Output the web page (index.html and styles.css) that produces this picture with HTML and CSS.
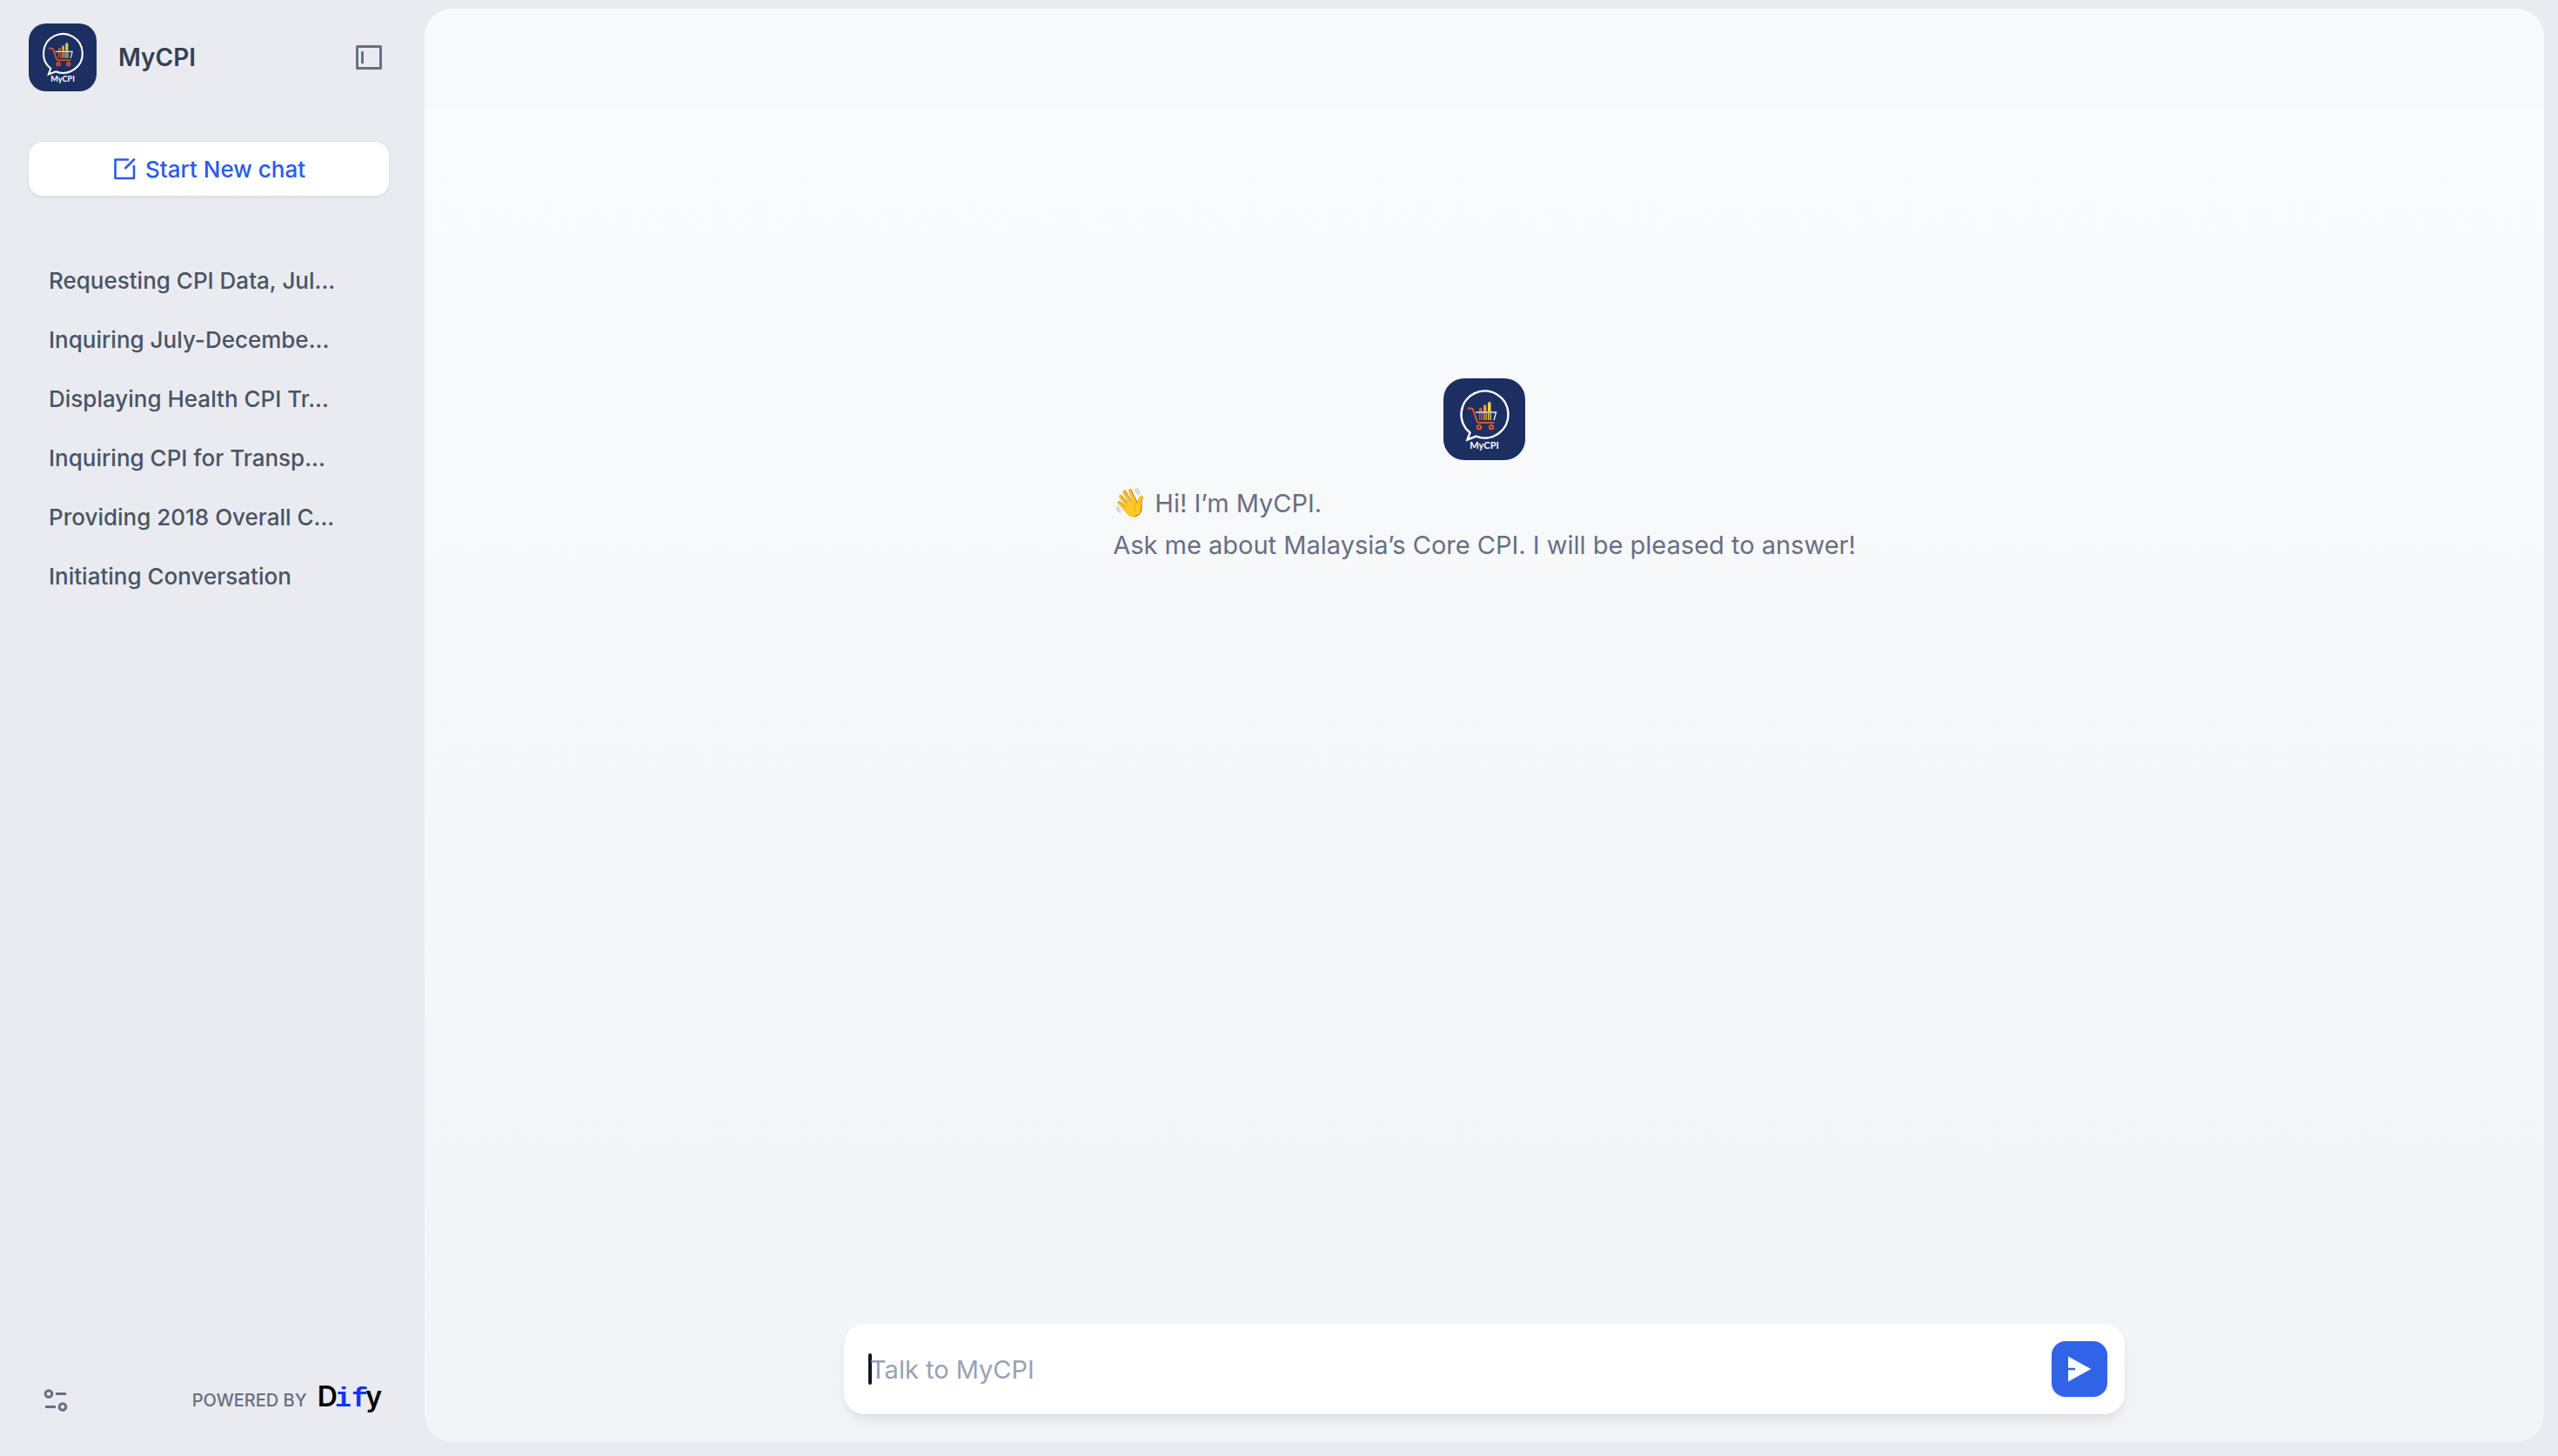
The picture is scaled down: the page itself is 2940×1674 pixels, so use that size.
FILE: index.html
```html
<!DOCTYPE html>
<html lang="en">
<head>
<meta charset="utf-8">
<meta name="viewport" content="width=device-width, initial-scale=1">
<title>MyCPI</title>
<link rel="stylesheet" href="styles.css">
</head>
<body>
<div class="app">
  <aside class="sidebar">
    <header class="brand">
      <svg class="brand-logo" viewBox="0 0 94 94" role="img" aria-label="MyCPI logo">
        <rect width="94" height="94" fill="#1c2f62"/>
        <path d="M30.500 62.500 A27 27 0 1 1 37.500 66.600 L27.500 70.500 Z" fill="none" stroke="#fff" stroke-width="2.500"/>
        <path d="M28.500 34.500H32q1.500 0 2 1.500L38.500 49q.6 1.900 2.500 1.900H57.500" fill="none" stroke="#e2572b" stroke-width="2" stroke-linecap="round"/>
        <g fill="none" stroke="#e2572b" stroke-width="2"><circle cx="41" cy="56.200" r="2.200"/><circle cx="55" cy="56.200" r="2.200"/></g>
        <path d="M41 38V35.300a1.700 1.700 0 0 1 3.400 0V38z" fill="#e2572b"/>
        <path d="M46 38V32a1.700 1.700 0 0 1 3.400 0v6z" fill="#eda13a"/>
        <path d="M51 38V28.700a1.800 1.800 0 0 1 3.600 0V38z" fill="#f0d13c"/>
        <path d="M41.700 40v8M44.200 40v8" stroke="#e2572b" stroke-width="1.400"/>
        <path d="M46.900 40v8M49.200 40v8" stroke="#eda13a" stroke-width="1.400"/>
        <path d="M51.700 40v8M54.200 40v8" stroke="#f0d13c" stroke-width="1.400"/>
        <path d="M37 39H60.500L58 48" fill="none" stroke="#e8ebf5" stroke-width="1.400"/>
        <text class="logo-text" x="47" y="81" text-anchor="middle">MyCPI</text>
      </svg>
      <h1 class="brand-name">MyCPI</h1>
      <button class="icon-button" type="button" aria-label="Collapse sidebar">
        <svg width="32" height="30" viewBox="0 0 32 30" fill="none" stroke="#676f83" stroke-width="3" stroke-linejoin="round"><rect x="2.500" y="2.500" width="27" height="25"/><path d="M8.500 8v14"/></svg>
      </button>
    </header>
    <button class="new-chat" type="button">
      <svg width="28" height="28" viewBox="0 0 28 28" fill="none" stroke="#2a5be8" stroke-width="2.600" stroke-linejoin="round" stroke-linecap="round"><path d="M18 3.500H3.500v21.500H25V11"/><path d="M14.500 14L25.800 2.700" stroke-linecap="butt"/></svg>
      Start New chat
    </button>
    <nav class="history" aria-label="Conversations">
      <a class="history-item" href="#">Requesting CPI Data, Jul...</a>
      <a class="history-item" href="#">Inquiring July-Decembe...</a>
      <a class="history-item" href="#">Displaying Health CPI Tr...</a>
      <a class="history-item" href="#">Inquiring CPI for Transp...</a>
      <a class="history-item" href="#">Providing 2018 Overall C...</a>
      <a class="history-item" href="#">Initiating Conversation</a>
    </nav>
    <footer class="sidebar-footer">
      <button class="icon-button" type="button" aria-label="Settings">
        <svg width="28" height="28" viewBox="0 0 28 28" fill="none" stroke="#676f83" stroke-width="3"><circle cx="6" cy="6.500" r="3.800"/><path d="M14 6.500h12M2 21.500h12"/><circle cx="22" cy="21.500" r="3.800"/></svg>
      </button>
      <span class="powered">POWERED BY</span>
      <a class="dify" href="#" aria-label="Dify">D<span class="dify-mono">if</span>y</a>
    </footer>
  </aside>
  <main class="panel">
    <div class="panel-header"></div>
    <section class="welcome">
      <svg class="welcome-logo" viewBox="0 0 94 94" role="img" aria-label="MyCPI logo">
        <rect width="94" height="94" fill="#1c2f62"/>
        <path d="M30.500 62.500 A27 27 0 1 1 37.500 66.600 L27.500 70.500 Z" fill="none" stroke="#fff" stroke-width="2.500"/>
        <path d="M28.500 34.500H32q1.500 0 2 1.500L38.500 49q.6 1.900 2.500 1.900H57.500" fill="none" stroke="#e2572b" stroke-width="2" stroke-linecap="round"/>
        <g fill="none" stroke="#e2572b" stroke-width="2"><circle cx="41" cy="56.200" r="2.200"/><circle cx="55" cy="56.200" r="2.200"/></g>
        <path d="M41 38V35.300a1.700 1.700 0 0 1 3.400 0V38z" fill="#e2572b"/>
        <path d="M46 38V32a1.700 1.700 0 0 1 3.400 0v6z" fill="#eda13a"/>
        <path d="M51 38V28.700a1.800 1.800 0 0 1 3.600 0V38z" fill="#f0d13c"/>
        <path d="M41.700 40v8M44.200 40v8" stroke="#e2572b" stroke-width="1.400"/>
        <path d="M46.900 40v8M49.200 40v8" stroke="#eda13a" stroke-width="1.400"/>
        <path d="M51.700 40v8M54.200 40v8" stroke="#f0d13c" stroke-width="1.400"/>
        <path d="M37 39H60.500L58 48" fill="none" stroke="#e8ebf5" stroke-width="1.400"/>
        <text class="logo-text" x="47" y="81" text-anchor="middle">MyCPI</text>
      </svg>
      <p class="welcome-text"><span class="wave">👋</span> Hi! I’m MyCPI.<br>Ask me about Malaysia’s Core CPI. I will be pleased to answer!</p>
    </section>
    <form class="composer">
      <div class="field">
        <input class="message" type="text" placeholder="Talk to MyCPI" aria-label="Message">
      </div>
      <button class="send" type="button" aria-label="Send">
        <svg width="28" height="30" viewBox="0 0 28 30"><path d="M1 .5L27.300 15 1 29.500V16.300H9V13.700H1z" fill="#fff"/></svg>
      </button>
    </form>
  </main>
</div>
</body>
</html>
```
FILE: styles.css
```css
* { box-sizing: border-box; }

body {
  margin: 0;
  background: #e9ebf0;
  font-family: Inter, "Liberation Sans", sans-serif;
  color: #354052;
}

button {
  border: 0;
  padding: 0;
  background: none;
  font: inherit;
  cursor: pointer;
}

a { color: inherit; text-decoration: none; }

.logo-text { fill: #fff; font-family: Lato, sans-serif; font-size: 11px; font-weight: 700; }

.app { display: flex; min-height: 100vh; }

/* Sidebar */
.sidebar {
  display: flex;
  flex-direction: column;
  flex: none;
  width: 488px;
  padding: 27px 41px 43px 33px;
}

.brand { display: flex; align-items: center; padding-right: 7px; }
.brand-logo { width: 78px; height: 78px; border-radius: 20px; }
.brand-name { flex: 1; margin: 0 0 0 25px; font-size: 28px; font-weight: 600; line-height: 40px; }
.icon-button { display: flex; }

.new-chat {
  display: flex;
  align-items: center;
  justify-content: center;
  gap: 10px;
  height: 62px;
  margin-top: 58px;
  border-radius: 16px;
  background: #fff;
  box-shadow: 0 0 0 1px #dfe1e6, 0 2px 4px rgba(16, 24, 40, 0.06);
  color: #2a5be8;
  font-size: 26px;
  font-weight: 500;
}

.history { display: flex; flex-direction: column; gap: 4px; margin-top: 66px; }
.history-item {
  padding: 12px 23px;
  color: #495464;
  font-size: 26px;
  font-weight: 500;
  line-height: 40px;
  white-space: nowrap;
}

.sidebar-footer {
  display: flex;
  align-items: center;
  margin-top: auto;
  padding: 0 8px 0 17px;
}
.powered { margin: 0 12px 0 auto; color: #676f83; font-size: 20px; font-weight: 500; line-height: 32px; }
.dify { padding-bottom: 4px; color: #000; font-size: 32px; font-weight: 600; line-height: 36px; }
.dify-mono {
  margin: 0 -3px;
  color: #1433ff;
  font-family: "Liberation Mono", monospace;
  font-weight: 700;
}

/* Chat panel */
.panel {
  display: flex;
  flex-direction: column;
  flex: 1;
  min-width: 0;
  margin: 10px 16px 16px 0;
  overflow: hidden;
  border-radius: 32px;
  background: linear-gradient(#fafcfc, #f8f9fb 30%, #f2f4f7);
}
.panel-header { height: 112px; background: linear-gradient(#f9fafb, #f7f9fb); }

.welcome {
  display: flex;
  flex: 1;
  flex-direction: column;
  align-items: center;
  padding-top: 313px;
}
.welcome-logo { width: 94px; height: 94px; border-radius: 24px; }
.welcome-text {
  margin: 26px 0 0;
  color: #676f83;
  font-size: 29px;
  line-height: 48px;
}
.wave { font-size: 32px; line-height: 32px; }

.composer {
  display: flex;
  align-items: center;
  align-self: center;
  width: 1472px;
  max-width: 90%;
  margin-bottom: 32px;
  padding: 20px 20px 20px 30px;
  border-radius: 24px;
  background: #fff;
  box-shadow: 0 8px 16px -4px rgba(16, 24, 40, 0.1), 0 2px 6px rgba(16, 24, 40, 0.03);
}
.field { position: relative; flex: 1; }
.field::before {
  content: "";
  position: absolute;
  left: -2px;
  top: 2px;
  width: 4px;
  height: 36px;
  border-radius: 2px;
  background: #101828;
}
.message {
  position: relative;
  width: 100%;
  height: 40px;
  padding: 0;
  border: 0;
  outline: 0;
  background: transparent;
  color: #101828;
  font: inherit;
  font-size: 29px;
}
.message::placeholder { color: #98a2b3; opacity: 1; }
.send {
  display: flex;
  align-items: center;
  justify-content: center;
  width: 64px;
  height: 64px;
  border-radius: 16px;
  background: #3163e9;
  box-shadow: 0 1px 3px rgba(16, 24, 40, 0.1);
}
```
